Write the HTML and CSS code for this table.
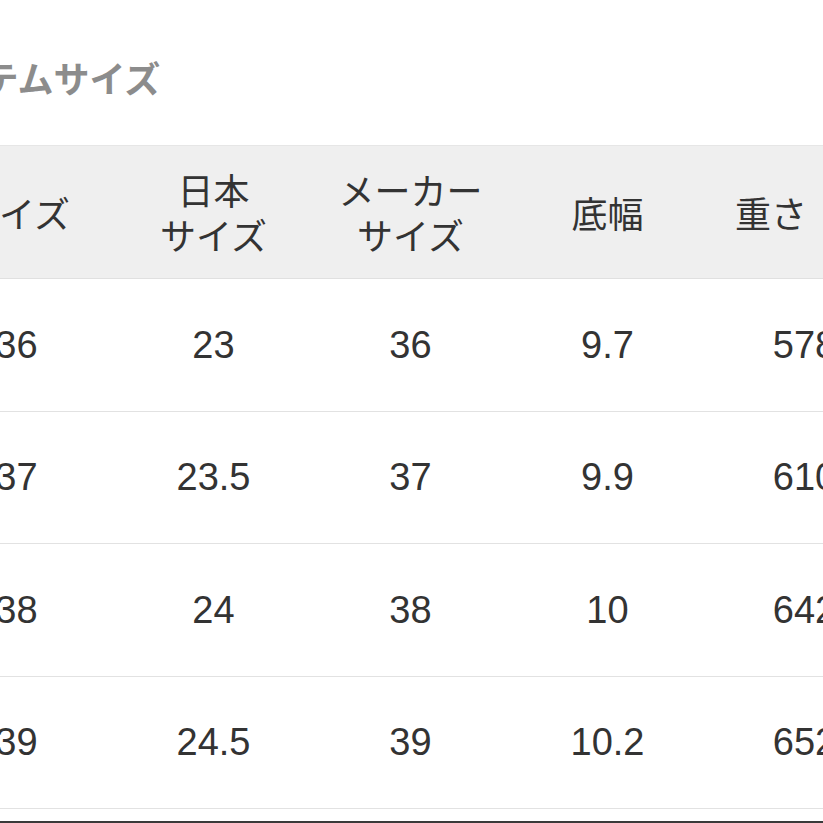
FILE: index.html
```html
<!DOCTYPE html>
<html lang="ja">
<head>
<meta charset="utf-8">
<link rel="stylesheet" href="styles.css">
</head>
<body>
<div class="page">
  <h2 class="title">アイテムサイズ</h2>
  <div class="table">
    <div class="row head">
      <div class="cell">サイズ</div>
      <div class="cell">日本<br>サイズ</div>
      <div class="cell">メーカー<br>サイズ</div>
      <div class="cell">底幅</div>
      <div class="cell weight">重さ</div>
    </div>
    <div class="row">
      <div class="cell">36</div><div class="cell">23</div><div class="cell">36</div><div class="cell">9.7</div><div class="cell">578</div>
    </div>
    <div class="row">
      <div class="cell">37</div><div class="cell">23.5</div><div class="cell">37</div><div class="cell">9.9</div><div class="cell">610</div>
    </div>
    <div class="row">
      <div class="cell">38</div><div class="cell">24</div><div class="cell">38</div><div class="cell">10</div><div class="cell">642</div>
    </div>
    <div class="row">
      <div class="cell">39</div><div class="cell">24.5</div><div class="cell">39</div><div class="cell">10.2</div><div class="cell">652</div>
    </div>
  </div>
  <div class="footer-rule"></div>
</div>
</body>
</html>
```

FILE: styles.css
```css
html, body {
  margin: 0;
  padding: 0;
  background: #ffffff;
  overflow: hidden;
}
body {
  width: 823px;
  height: 823px;
  font-family: "Liberation Sans", "Noto Sans CJK JP", sans-serif;
  color: #333333;
}
.page {
  margin-left: -82px;
  width: 985px;
  padding-top: 58px;
}
.title {
  margin: 0 0 0 -5px;
  font-family: "Noto Sans CJK JP", sans-serif;
  font-size: 36px;
  font-weight: 700;
  line-height: 38px;
  color: #8c8c8c;
  letter-spacing: 0;
}
.table {
  margin-top: 49px;
  border-top: 1px solid #e6e6e6;
}
.row {
  display: grid;
  grid-template-columns: repeat(5, 197px);
  height: 131.5px;
  border-bottom: 1px solid #e2e2e2;
}
.row.head {
  height: 132px;
  background: #efefef;
  border-bottom: 1px solid #e0e0e0;
}
.cell {
  display: flex;
  align-items: center;
  justify-content: center;
  text-align: center;
  font-size: 38px;
  line-height: 44px;
}
.head .cell {
  font-family: "Noto Sans CJK JP", sans-serif;
  font-size: 36px;
  line-height: 45px;
  color: #333333;
}
.head .cell.weight {
  padding-right: 67px;
}
.footer-rule {
  margin-top: 12px;
  border-top: 3px solid #3a3a3a;
}
```
